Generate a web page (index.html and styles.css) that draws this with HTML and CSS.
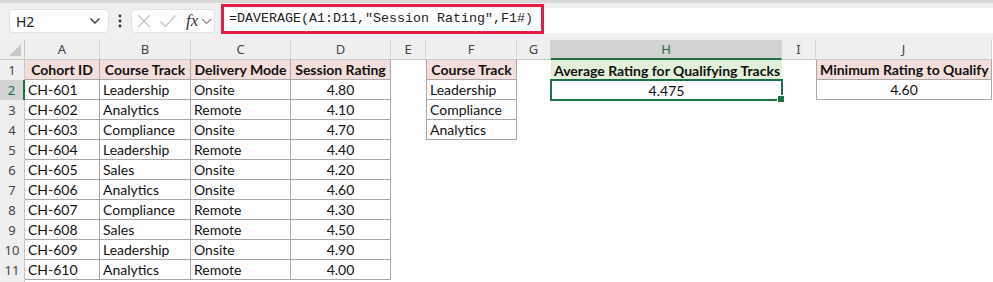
FILE: index.html
```html
<!DOCTYPE html>
<html lang="en">
  <head>
    <meta charset="UTF-8" />
    <title>DAVERAGE - Session Ratings</title>
    <link rel="stylesheet" href="styles.css">
  </head>
  <body>
    <!-- Name box + formula bar -->
    <div class="toolbar">
      <div class="namebox">
        <span>H2</span>
        <svg class="chev" width="12" height="8" viewBox="0 0 12 8"><path d="M1.5 1.5 L6 6 L10.5 1.5" fill="none" stroke="#333" stroke-width="1.3"/></svg>
      </div>
      <svg class="dots" width="4" height="14" viewBox="0 0 4 14"><circle cx="2" cy="2" r="1.4" fill="#333"/><circle cx="2" cy="7" r="1.4" fill="#333"/><circle cx="2" cy="12" r="1.4" fill="#333"/></svg>
      <div class="fxbox">
        <svg width="16" height="16" viewBox="0 0 16 16"><path d="M2 2 L14 14 M14 2 L2 14" stroke="#c4c4c4" stroke-width="1.3"/></svg>
        <svg width="18" height="16" viewBox="0 0 18 16"><path d="M1.5 8.5 L6.5 13.5 L16.5 2.5" fill="none" stroke="#c4c4c4" stroke-width="1.3"/></svg>
        <span class="fx">fx</span>
        <svg class="chev" width="11" height="7" viewBox="0 0 11 7"><path d="M1 1 L5.5 5.5 L10 1" fill="none" stroke="#888" stroke-width="1.2"/></svg>
      </div>
      <div class="formula">
        <div class="formula-hl">=DAVERAGE(A1:D11,"Session Rating",F1#)</div>
      </div>
    </div>

    <div class="sheet">
      <!-- column headers -->
      <div class="corner"><svg width="12" height="12" viewBox="0 0 12 12"><path d="M12 0 L12 12 L0 12 Z" fill="#c8c8c8"/></svg></div>
      <div class="ch">A</div>
      <div class="ch">B</div>
      <div class="ch">C</div>
      <div class="ch">D</div>
      <div class="ch">E</div>
      <div class="ch">F</div>
      <div class="ch">G</div>
      <div class="ch sel">H</div>
      <div class="ch">I</div>
      <div class="ch">J</div>

      <!-- row 1 -->
      <div class="rh">1</div>
      <div class="c b hd">Cohort ID</div>
      <div class="c b hd">Course Track</div>
      <div class="c b hd">Delivery Mode</div>
      <div class="c b hd">Session Rating</div>
      <div class="c"></div>
      <div class="c b bl hd">Course Track</div>
      <div class="c"></div>
      <div class="c gh">Average Rating for Qualifying Tracks</div>
      <div class="c"></div>
      <div class="c b bl hd">Minimum Rating to Qualify</div>

      <!-- row 2 -->
      <div class="rh sel">2</div>
      <div class="c b">CH-601</div>
      <div class="c b">Leadership</div>
      <div class="c b">Onsite</div>
      <div class="c b num">4.80</div>
      <div class="c"></div>
      <div class="c b bl">Leadership</div>
      <div class="c"></div>
      <div class="c num active">4.475</div>
      <div class="c"></div>
      <div class="c b bl num">4.60</div>

      <!-- row 3 -->
      <div class="rh">3</div>
      <div class="c b">CH-602</div>
      <div class="c b">Analytics</div>
      <div class="c b">Remote</div>
      <div class="c b num">4.10</div>
      <div class="c"></div>
      <div class="c b bl">Compliance</div>
      <div class="c"></div>
      <div class="c"></div>
      <div class="c"></div>
      <div class="c"></div>

      <!-- row 4 -->
      <div class="rh">4</div>
      <div class="c b">CH-603</div>
      <div class="c b">Compliance</div>
      <div class="c b">Onsite</div>
      <div class="c b num">4.70</div>
      <div class="c"></div>
      <div class="c b bl">Analytics</div>
      <div class="c"></div>
      <div class="c"></div>
      <div class="c"></div>
      <div class="c"></div>

      <!-- row 5 -->
      <div class="rh">5</div>
      <div class="c b">CH-604</div>
      <div class="c b">Leadership</div>
      <div class="c b">Remote</div>
      <div class="c b num">4.40</div>
      <div class="c"></div><div class="c"></div><div class="c"></div><div class="c"></div><div class="c"></div><div class="c"></div>

      <!-- row 6 -->
      <div class="rh">6</div>
      <div class="c b">CH-605</div>
      <div class="c b">Sales</div>
      <div class="c b">Onsite</div>
      <div class="c b num">4.20</div>
      <div class="c"></div><div class="c"></div><div class="c"></div><div class="c"></div><div class="c"></div><div class="c"></div>

      <!-- row 7 -->
      <div class="rh">7</div>
      <div class="c b">CH-606</div>
      <div class="c b">Analytics</div>
      <div class="c b">Onsite</div>
      <div class="c b num">4.60</div>
      <div class="c"></div><div class="c"></div><div class="c"></div><div class="c"></div><div class="c"></div><div class="c"></div>

      <!-- row 8 -->
      <div class="rh">8</div>
      <div class="c b">CH-607</div>
      <div class="c b">Compliance</div>
      <div class="c b">Remote</div>
      <div class="c b num">4.30</div>
      <div class="c"></div><div class="c"></div><div class="c"></div><div class="c"></div><div class="c"></div><div class="c"></div>

      <!-- row 9 -->
      <div class="rh">9</div>
      <div class="c b">CH-608</div>
      <div class="c b">Sales</div>
      <div class="c b">Remote</div>
      <div class="c b num">4.50</div>
      <div class="c"></div><div class="c"></div><div class="c"></div><div class="c"></div><div class="c"></div><div class="c"></div>

      <!-- row 10 -->
      <div class="rh">10</div>
      <div class="c b">CH-609</div>
      <div class="c b">Leadership</div>
      <div class="c b">Onsite</div>
      <div class="c b num">4.90</div>
      <div class="c"></div><div class="c"></div><div class="c"></div><div class="c"></div><div class="c"></div><div class="c"></div>

      <!-- row 11 -->
      <div class="rh">11</div>
      <div class="c b">CH-610</div>
      <div class="c b">Analytics</div>
      <div class="c b">Remote</div>
      <div class="c b num">4.00</div>
      <div class="c"></div><div class="c"></div><div class="c"></div><div class="c"></div><div class="c"></div><div class="c"></div>

      <!-- row 12 (only its top edge shows) -->
      <div class="rh"></div>
    </div>
  </body>
</html>
```

FILE: styles.css
```css
* {
  box-sizing: border-box;
  margin: 0;
  padding: 0;
}
body {
  width: 993px;
  height: 282px;
  overflow: hidden;
  background: #fff;
  font-family: "Noto Sans", "Open Sans", sans-serif;
  color: #222;
}
/* Formula bar strip */
.toolbar {
  height: 40px;
  background: #f0f0f0;
  border-top: 3px solid #d8d8d8;
  display: flex;
  align-items: flex-start;
  padding-top: 6px;
}
.namebox {
  width: 100px;
  height: 24px;
  margin-left: 9px;
  background: #fff;
  border: 1px solid #e2e2e2;
  border-radius: 4px;
  display: flex;
  align-items: center;
  justify-content: space-between;
  padding: 0 7px 0 6px;
  font-size: 14px;
  color: #222;
}
.dots {
  margin: 5px 0 0 9px;
}
.fxbox {
  width: 84px;
  height: 24px;
  margin-left: 9px;
  background: #fff;
  border: 1px solid #e2e2e2;
  border-radius: 4px;
  display: flex;
  align-items: center;
  gap: 7px;
  padding-left: 4px;
}
.fx {
  font-family: "Liberation Serif", serif;
  font-style: italic;
  font-size: 17px;
  color: #333;
  margin-left: 2px;
}
.fxbox .chev {
  margin-left: -4px;
}
.formula {
  flex: 1;
  height: 25px;
  margin: -1px 0 0 6px;
  background: #fff;
}
/* highlight around the formula text */
.formula-hl {
  width: 323px;
  height: 30px;
  margin-top: -4px;
  border: 3px solid #e41d48;
  padding-left: 5px;
  font-family: "Liberation Mono", monospace;
  font-size: 13.33px;
  line-height: 24px;
  color: #222;
  white-space: nowrap;
}
/* Grid */
.sheet {
  display: grid;
  grid-template-columns: 25px 75px 91px 100px 100px 35px 91px 34px 231px 34px 176px;
  grid-auto-rows: 20px;
  font-family: "Lato", sans-serif;
  font-size: 14px;
}
.corner,
.ch {
  background: #efefef;
  border-right: 1px solid #d5d5d5;
  border-bottom: 1px solid #c8c8c8;
}
.corner {
  display: flex;
  align-items: flex-end;
  justify-content: flex-end;
  padding: 0 3px 3px 0;
  border-right-color: #c8c8c8;
}
.ch {
  font-family: "Noto Sans", sans-serif;
  font-size: 13px;
  color: #444;
  text-align: center;
  line-height: 19px;
}
.ch.sel {
  background: #d3d3d3;
  color: #1e6b41;
  border-bottom: 2px solid #1e7145;
}
.rh {
  background: #efefef;
  border-right: 1px solid #c8c8c8;
  font-family: "Noto Sans", sans-serif;
  font-size: 13px;
  color: #444;
  text-align: center;
  line-height: 21px;
}
.rh.sel {
  background: #d3d3d3;
  color: #1e6b41;
  border-right: 2px solid #1e7145;
}
.c {
  padding: 0 3px;
  line-height: 21px;
  white-space: nowrap;
  overflow: visible;
  color: #111;
}
.b {
  border-right: 1px solid #a8a8a8;
  border-bottom: 1px solid #a8a8a8;
  line-height: 20px;
}
.bl {
  border-left: 1px solid #a8a8a8;
}
.hd {
  background: #f4dedb;
  font-weight: bold;
  text-align: center;
}
.gh {
  background: #e2efda;
  font-weight: bold;
  text-align: center;
}
.num {
  text-align: center;
}
/* active cell outline + fill handle */
.active {
  position: relative;
}
.active::after {
  content: "";
  position: absolute;
  top: -1px;
  left: -1px;
  right: -1px;
  bottom: -1px;
  border: 2px solid #1e7145;
}
.active::before {
  content: "";
  position: absolute;
  right: -3px;
  bottom: -3px;
  width: 6px;
  height: 6px;
  background: #1e7145;
  border: 1px solid #fff;
  z-index: 1;
}
```
